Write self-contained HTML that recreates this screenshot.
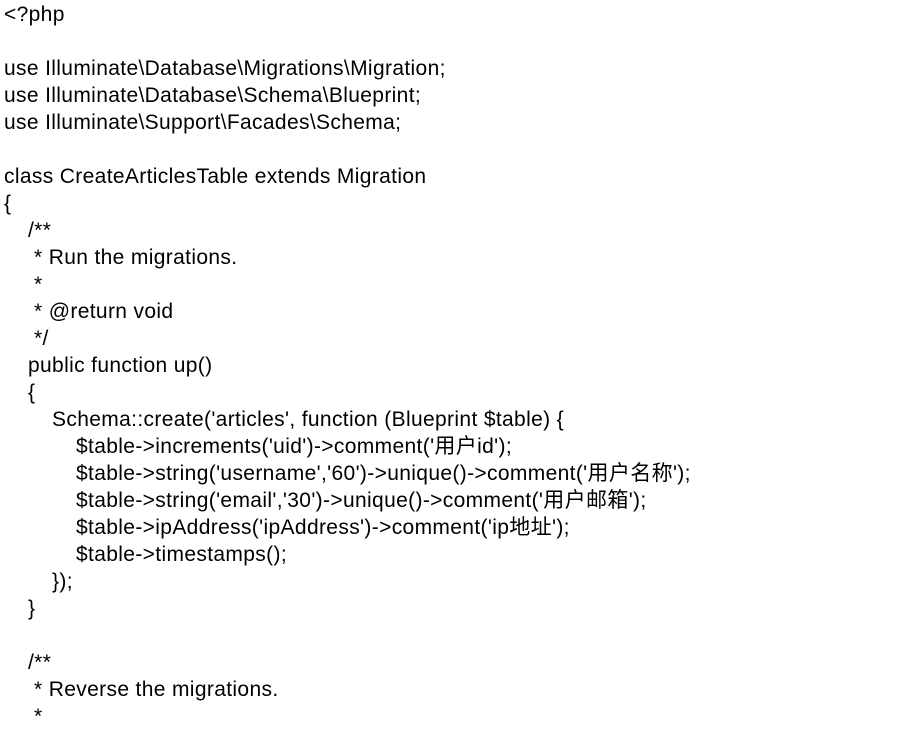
<!DOCTYPE html>
<html><head><meta charset="utf-8"><style>
html,body{margin:0;padding:0;background:#fff;width:919px;height:713px;overflow:hidden}
.c{position:absolute;left:4px;top:1px;font-family:"Liberation Sans","Noto Sans CJK SC",sans-serif;font-size:21px;letter-spacing:0.35px;line-height:27px;color:#000}
.c div{height:27px;white-space:pre}
.i1{padding-left:24px}.i15{padding-left:30px}.i2{padding-left:48px}.i3{padding-left:72px}
</style></head><body><div class="c">
<div>&lt;?php</div>
<div></div>
<div>use Illuminate\Database\Migrations\Migration;</div>
<div>use Illuminate\Database\Schema\Blueprint;</div>
<div>use Illuminate\Support\Facades\Schema;</div>
<div></div>
<div>class CreateArticlesTable extends Migration</div>
<div>{</div>
<div class="i1">/**</div>
<div class="i15">* Run the migrations.</div>
<div class="i15">*</div>
<div class="i15">* @return void</div>
<div class="i15">*/</div>
<div class="i1">public function up()</div>
<div class="i1">{</div>
<div class="i2">Schema::create('articles', function (Blueprint $table) {</div>
<div class="i3">$table-&gt;increments('uid')-&gt;comment('用户id');</div>
<div class="i3">$table-&gt;string('username','60')-&gt;unique()-&gt;comment('用户名称');</div>
<div class="i3">$table-&gt;string('email','30')-&gt;unique()-&gt;comment('用户邮箱');</div>
<div class="i3">$table-&gt;ipAddress('ipAddress')-&gt;comment('ip地址');</div>
<div class="i3">$table-&gt;timestamps();</div>
<div class="i2">});</div>
<div class="i1">}</div>
<div></div>
<div class="i1">/**</div>
<div class="i15">* Reverse the migrations.</div>
<div class="i15">*</div>
</div></body></html>
